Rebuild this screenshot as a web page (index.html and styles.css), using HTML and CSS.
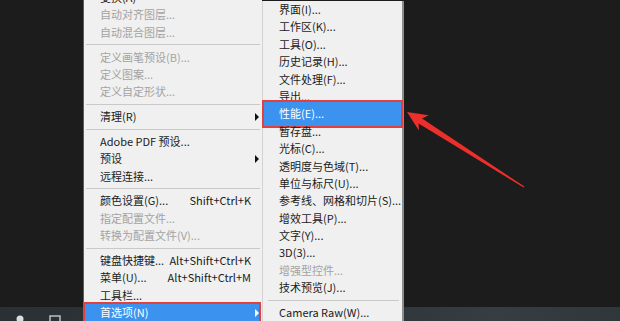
FILE: index.html
```html
<!DOCTYPE html>
<html lang="zh-CN">
<head>
  <meta charset="UTF-8" />
  <title>首选项 - 性能</title>
  <link rel="stylesheet" href="styles.css">
</head>
<body>
  <div class="desktop">
    <div class="workspace"></div>
    <div class="taskbar">
      <svg class="task-icons" width="80" height="14" viewBox="0 0 80 14">
        <circle cx="20" cy="12" r="3.5" fill="#d9dde0"/>
        <rect x="50" y="9" width="10" height="8" fill="none" stroke="#b9bec2" stroke-width="1.5"/>
      </svg>
    </div>
  </div>

  <ul class="menu main-menu">
    <li class="item">变换(A)</li>
    <li class="item disabled">自动对齐图层...</li>
    <li class="item disabled">自动混合图层...</li>
    <li class="sep"></li>
    <li class="item disabled">定义画笔预设(B)...</li>
    <li class="item disabled">定义图案...</li>
    <li class="item disabled">定义自定形状...</li>
    <li class="sep"></li>
    <li class="item has-sub">清理(R)<span class="caret"></span></li>
    <li class="sep"></li>
    <li class="item">Adobe PDF 预设...</li>
    <li class="item has-sub">预设<span class="caret"></span></li>
    <li class="item">远程连接...</li>
    <li class="sep"></li>
    <li class="item">颜色设置(G)...<span class="key">Shift+Ctrl+K</span></li>
    <li class="item disabled">指定配置文件...</li>
    <li class="item disabled">转换为配置文件(V)...</li>
    <li class="sep"></li>
    <li class="item">键盘快捷键...<span class="key">Alt+Shift+Ctrl+K</span></li>
    <li class="item">菜单(U)...<span class="key">Alt+Shift+Ctrl+M</span></li>
    <li class="item">工具栏...</li>
    <li class="item active has-sub prefs"><span class="label">首选项(N)</span><span class="caret"></span></li>
  </ul>

  <ul class="menu sub-menu">
    <li class="item">界面(I)...</li>
    <li class="item">工作区(K)...</li>
    <li class="item">工具(O)...</li>
    <li class="item">历史记录(H)...</li>
    <li class="item">文件处理(F)...</li>
    <li class="item">导出...</li>
    <li class="item active perf"><span class="label">性能(E)...</span></li>
    <li class="item">暂存盘...</li>
    <li class="item">光标(C)...</li>
    <li class="item">透明度与色域(T)...</li>
    <li class="item">单位与标尺(U)...</li>
    <li class="item">参考线、网格和切片(S)...</li>
    <li class="item">增效工具(P)...</li>
    <li class="item">文字(Y)...</li>
    <li class="item">3D(3)...</li>
    <li class="item disabled">增强型控件...</li>
    <li class="item">技术预览(J)...</li>
    <li class="sep"></li>
    <li class="item">Camera Raw(W)...</li>
  </ul>

  <svg class="pointer" width="620" height="321" viewBox="0 0 620 321">
    <polygon points="407,112 428.7,115.2 422.1,118.6 524.4,186.6 523.6,187.4 418.6,123.6 418.9,130.4" fill="#ec2f2b"/>
  </svg>
</body>
</html>
```

FILE: styles.css
```css
* { box-sizing: border-box; }

body {
  margin: 0;
  width: 620px;
  height: 321px;
  overflow: hidden;
  position: relative;
  background: #1c1c1c;
  font-family: "Noto Sans CJK SC", "Noto Sans", sans-serif;
  font-size: 11px;
  color: #1b1b1b;
}

.desktop {
  height: 321px;
  display: flex;
  flex-direction: column;
}

.workspace {
  flex: 1;
  background: #1c1c1c;
}

.taskbar {
  height: 14px;
  background: linear-gradient(90deg, #2b3034 0%, #2f363b 60%, #363e43 80%, #30373b 100%);
}

.task-icons {
  display: block;
}

/* menus */
.menu {
  list-style: none;
  margin: 0;
  padding: 0;
  position: absolute;
  background: #f0f0f0;
}

.main-menu {
  left: 83px;
  top: -11px;
  width: 179px;
  border-left: 1px solid #5c5c5c;
}

.sub-menu {
  left: 262px;
  top: 1px;
  width: 142px;
  height: 330px;
  border-left: 1px solid #d2d2d2;
  border-right: 2px solid #8d8d8d;
}

.item {
  height: 17.4px;
  line-height: 17.4px;
  padding: 0 11px 0 16px;
  display: flex;
  align-items: center;
  white-space: nowrap;
  position: relative;
}

.disabled {
  color: #a3a3a3;
}

.key {
  margin-left: auto;
}

.sep {
  height: 7.4px;
  margin: 0 3px;
  position: relative;
}

.sep::after {
  content: "";
  position: absolute;
  left: 0;
  right: 0;
  top: 3px;
  height: 1px;
  background: #c9c9c9;
}

.main-menu .sep {
  margin: 0 2px;
}

.caret {
  margin-left: auto;
  margin-right: -8px;
  width: 0;
  height: 0;
  border-top: 4px solid transparent;
  border-bottom: 4px solid transparent;
  border-left: 4px solid #111;
}

/* highlighted rows with the red annotation box */
.active {
  color: #fff;
}

.active .label,
.active .caret {
  position: relative;
  z-index: 1;
}

.active .caret {
  border-left-color: #fff;
}

.active::before {
  content: "";
  position: absolute;
  background: #3b93ef;
  border: 2px solid #e2403c;
}

.prefs::before {
  left: -1px;
  right: 1px;
  top: -2px;
  bottom: -3px;
}

.sub-menu .sep {
  margin: 0 3px 0 5px;
}

.perf::before {
  left: -1px;
  right: -1px;
  top: -5px;
  bottom: -5px;
}

.pointer {
  position: absolute;
  left: 0;
  top: 0;
  pointer-events: none;
}
```
